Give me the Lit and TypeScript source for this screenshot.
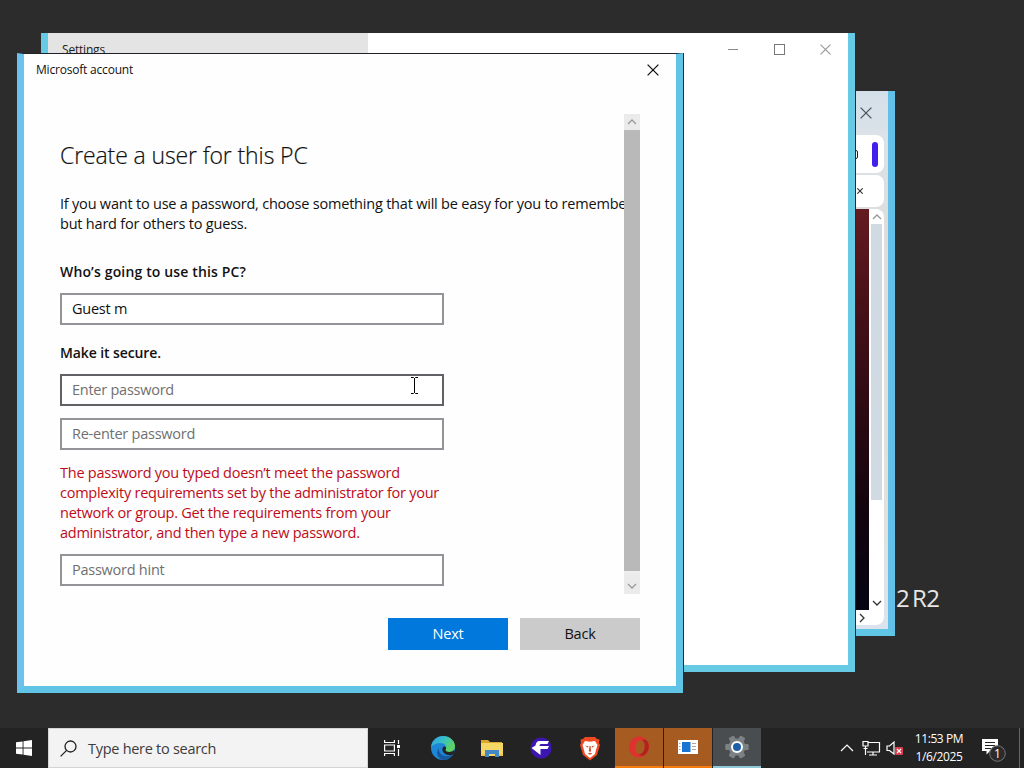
import { LitElement, css, html, svg } from "lit";
import { customElement, property, state } from "lit/decorators.js";
import { classMap } from "lit/directives/class-map.js";

const chevron = (points: string) => html`
  <svg width="10" height="10" viewBox="0 0 10 10" fill="none" stroke="currentColor" stroke-width="1.3">
    <polyline points=${points} />
  </svg>
`;

const UP = "1,7 5,3 9,7";
const DOWN = "1,3 5,7 9,3";
const RIGHT = "3,1 7,5 3,9";

const cross = (size: number) => html`
  <svg width=${size} height=${size} viewBox="0 0 12 12" fill="none" stroke="currentColor" stroke-width="1.3">
    <path d="M.6 .6 11.4 11.4M11.4 .6 .6 11.4" />
  </svg>
`;

@customElement("browser-window")
export class BrowserWindow extends LitElement {
  static styles = css`
    :host {
      display: flex;
      flex-direction: column;
      box-sizing: border-box;
      border-right: 7px solid #62bfe8;
      border-bottom: 7px solid #5fc6e6;
      background: linear-gradient(#d3dfe9, #dbe2e8 44px, #dddddd 130px, #e2e0da 400px, #dde3ee);
      padding: 0 4px 4px 0;
    }
    .titlebar {
      display: flex;
      justify-content: flex-end;
      align-items: center;
      height: 44px;
      padding-right: 12px;
      color: #4a545c;
    }
    .bar {
      display: flex;
      justify-content: flex-end;
      align-items: center;
      box-sizing: border-box;
      background: #fff;
      border-radius: 8px;
    }
    .address {
      height: 38px;
      padding-right: 6px;
      gap: 14px;
    }
    .box {
      width: 5px;
      height: 7px;
      border: 1.5px solid #222;
      border-radius: 2px;
    }
    .pill {
      width: 6px;
      height: 25px;
      border-radius: 3px;
      background: #431fec;
    }
    .tabs {
      height: 32px;
      margin-top: 2px;
      padding-right: 21px;
      color: #333;
    }
    .tabs svg {
      stroke-width: 2.2px;
    }
    .view {
      display: flex;
      flex: 1;
      margin-top: 2px;
      background: #fff;
      border-radius: 0 8px 0 0;
    }
    .page {
      flex: 1;
      background: linear-gradient(#641c20, #4b1219 20%, #2d0a13 50%, #12040e 75%, #050512);
    }
    .scroll {
      display: flex;
      flex-direction: column;
      align-items: center;
      width: 15px;
      color: #999;
    }
    .arrow {
      display: flex;
      align-items: center;
      height: 15px;
    }
    .thumb {
      width: 11px;
      height: 276px;
      background: #cfdae3;
    }
    .arrow.last {
      margin-top: auto;
      color: #333;
    }
    .bottom {
      display: flex;
      justify-content: flex-end;
      align-items: center;
      box-sizing: border-box;
      height: 15px;
      padding-right: 17px;
      background: #fff;
      border-radius: 0 0 8px 0;
      color: #333;
    }
  `;

  render() {
    return html`
      <div class="titlebar">${cross(12)}</div>
      <div class="bar address">
        <div class="box"></div>
        <div class="pill"></div>
      </div>
      <div class="bar tabs">${cross(6)}</div>
      <div class="view">
        <div class="page"></div>
        <div class="scroll">
          <div class="arrow">${chevron(UP)}</div>
          <div class="thumb"></div>
          <div class="arrow last">${chevron(DOWN)}</div>
        </div>
      </div>
      <div class="bottom">${chevron(RIGHT)}</div>
    `;
  }
}

@customElement("settings-window")
export class SettingsWindow extends LitElement {
  static styles = css`
    :host {
      display: block;
      box-sizing: border-box;
      border: 7px solid #66cae5;
      border-top: 0;
      background: #fff;
    }
    .titlebar {
      display: flex;
      height: 32px;
    }
    .name {
      box-sizing: border-box;
      width: 320px;
      padding: 8px 14px;
      background: #e4e4e4;
      color: #1b1b1b;
      font-size: 12px;
      line-height: 18px;
      letter-spacing: -0.2px;
    }
    .controls {
      display: flex;
      flex: 1;
      justify-content: flex-end;
      align-items: center;
      gap: 35px;
      padding-right: 17px;
      color: #999;
    }
  `;

  render() {
    return html`
      <div class="titlebar">
        <div class="name">Settings</div>
        <div class="controls">
          <svg width="11" height="11"><path d="M0 5.5h10" stroke="#888" /></svg>
          <svg width="11" height="11"><rect x=".5" y=".5" width="10" height="10" fill="none" stroke="#777" /></svg>
          ${cross(11)}
        </div>
      </div>
    `;
  }
}

@customElement("text-field")
export class TextField extends LitElement {
  @property() value = "";
  @property() placeholder = "";
  @property({ type: Boolean }) hovered = false;

  static styles = css`
    :host {
      display: block;
    }
    input {
      display: block;
      box-sizing: border-box;
      width: 384px;
      height: 32px;
      padding: 0 10px 2px;
      border: 2px solid #959397;
      outline: 0;
      background: #fff;
      color: #111;
      font: inherit;
      letter-spacing: inherit;
    }
    input.hovered {
      border-color: #626064;
    }
    input::placeholder {
      color: #707070;
      opacity: 1;
    }
  `;

  render() {
    return html`
      <input
        class=${classMap({ hovered: this.hovered })}
        .value=${this.value}
        placeholder=${this.placeholder}
      />
    `;
  }
}

@customElement("account-dialog")
export class AccountDialog extends LitElement {
  static styles = css`
    :host {
      display: flex;
      flex-direction: column;
      box-sizing: border-box;
      border: 7px solid #60c4e6;
      border-left-color: #6bc2ee;
      border-top: 1px solid #20202a;
      box-shadow: 1px 0 0 #17303c;
      background: #fefefe;
      color: #111;
    }
    .titlebar {
      display: flex;
      justify-content: space-between;
      align-items: center;
      height: 31px;
      padding: 0 17px 1px 12px;
      font-size: 12px;
      letter-spacing: -0.2px;
    }
    .body {
      display: flex;
      justify-content: space-between;
      height: 480px;
      margin: 28px 36px 0;
      font-size: 14.5px;
      line-height: 20px;
      letter-spacing: -0.25px;
    }
    .form {
      width: 564px;
      overflow: hidden;
      white-space: nowrap;
    }
    h1 {
      margin: 25px 0 0;
      font-size: 23px;
      line-height: 32px;
      font-weight: 300;
      letter-spacing: -0.12px;
      -webkit-text-stroke: 0.2px #111;
    }
    p {
      margin: 23px 0 0;
      letter-spacing: -0.21px;
    }
    label {
      display: block;
      margin: 28px 0 11px;
      font-size: 14px;
      font-weight: 600;
      letter-spacing: 0.15px;
    }
    label.second {
      margin-top: 18px;
      letter-spacing: -0.1px;
    }
    text-field + text-field {
      margin-top: 12px;
    }
    .error {
      margin: 13px 0 11px;
      color: #bd0b18;
    }
    .scroll {
      display: flex;
      flex-direction: column;
      width: 16px;
      background: #eee;
      color: #999;
    }
    .arrow {
      display: flex;
      justify-content: center;
      align-items: center;
      height: 16px;
      background: #ebebeb;
    }
    .thumb {
      height: 441px;
      background: #b9b9b9;
    }
    .arrow.last {
      height: 21px;
      margin-top: auto;
    }
    .arrow.last svg {
      margin-top: 4px;
    }
    .actions {
      display: flex;
      justify-content: flex-end;
      gap: 12px;
      margin: 24px 36px 0;
    }
    button {
      width: 120px;
      height: 32px;
      padding: 0 0 2px;
      border: 0;
      background: #cbcbcb;
      color: #111;
      font: inherit;
      font-size: 14.5px;
      letter-spacing: -0.2px;
    }
    button.primary {
      background: #0078dc;
      color: #fff;
    }
  `;

  render() {
    return html`
      <div class="titlebar">
        <span>Microsoft account</span>
        ${cross(12)}
      </div>
      <div class="body">
        <div class="form">
          <h1>Create a user for this PC</h1>
          <p>
            If you want to use a password, choose something that will be easy for you to remember<br />
            but hard for others to guess.
          </p>
          <label>Who’s going to use this PC?</label>
          <text-field value="Guest m"></text-field>
          <label class="second">Make it secure.</label>
          <text-field placeholder="Enter password" hovered></text-field>
          <text-field placeholder="Re-enter password"></text-field>
          <div class="error">
            The password you typed doesn’t meet the password<br />
            complexity requirements set by the administrator for your<br />
            network or group. Get the requirements from your<br />
            administrator, and then type a new password.
          </div>
          <text-field placeholder="Password hint"></text-field>
        </div>
        <div class="scroll">
          <div class="arrow">${chevron(UP)}</div>
          <div class="thumb"></div>
          <div class="arrow last">${chevron(DOWN)}</div>
        </div>
      </div>
      <div class="actions">
        <button class="primary">Next</button>
        <button>Back</button>
      </div>
    `;
  }
}

const gearTeeth = [0, 60, 120, 180, 240, 300];

const icons = {
  edge: html`
    <svg width="26" height="26" viewBox="0 0 26 26">
      <defs>
        <linearGradient id="e1" x1="0" y1="0" x2="1" y2=".5">
          <stop offset="0" stop-color="#2f9fe0" />
          <stop offset=".5" stop-color="#36c0c8" />
          <stop offset="1" stop-color="#62d35c" />
        </linearGradient>
      </defs>
      <circle cx="13" cy="13" r="12" fill="#1f86d6" />
      <path d="M1 12C2 5 7 1 13 1c7 0 12 5 12 10 0 4-3 6-6.500 6-3 0-4-1-3-2.500 2-3-.5-6.500-5-6.500C6 8 3 10 1 12Z" fill="url(#e1)" />
      <path d="M9 13c-1 5 4 9 9 8 2 0 4-1 5.500-2.500C21 23 17 25 13.500 25 8 24 5 18 9 13Z" fill="#17599f" />
      <path d="M12.800 12.500c.8-1.300 2.700-1.200 3.200.2.300 1-.6 1.700-.5 2.600.2 1.300 2 1.700 3.500 1.700 2.200 0 4.200-.8 5.400-2.200.3 1.500-.1 3-.9 4.400-2 .9-3.500 1.100-5 .9-4.500-.5-7.200-4.300-5.700-7.600Z" fill="#232323" />
    </svg>
  `,
  explorer: html`
    <svg width="24" height="22" viewBox="0 0 24 22">
      <path d="M1 3h7l2 2h12v3H1Z" fill="#dda62c" />
      <path d="M1 6h22v13H1Z" fill="#f5d766" />
      <path d="M5 20v-7h14v7h-4v-3H9v3Z" fill="#4488c8" />
      <path d="M1 17h4v2H1zM19 17h4v2h-4z" fill="#f0c54c" />
    </svg>
  `,
  fab: html`
    <svg width="22" height="22" viewBox="0 0 22 22">
      <circle cx="11" cy="11" r="10.500" fill="#3c16b0" />
      <path d="M9.500 4H19l-1.500 3H11c-1 0-1.500.7-1.500 2H19l-1.500 3H10.500V18L1.500 11 5.500 8.500C6 5.500 7 4 9.500 4Z" fill="#fff" />
    </svg>
  `,
  brave: html`
    <svg width="22" height="25" viewBox="0 0 22 25">
      <path d="M6 1h10l2 2 2.500.5L20 7l1 2-3 10-7 5.500L4 19 1 9l1-2-.5-3.500L4 3Z" fill="#ef4a22" />
      <path d="M6 5l5 .8L16 5l2.500 4-1.500 5-1 4-5 4-5-4-1-4-1.500-5Z" fill="#fff" />
      <path d="M6 9.500l3.500.8L9 11.800ZM16 9.500l-3.500.8.5 1.500ZM10.500 10h1l.7 5-1.200 1-1.200-1ZM8.500 17.500l2.500-.8 2.500.8-2.500 1.300Z" fill="#d9502c" />
    </svg>
  `,
  opera: html`
    <svg width="22" height="24" viewBox="0 0 22 24">
      <g transform="rotate(12 11 12)">
        <path fill-rule="evenodd" d="M11 1.500a10 10.500 0 1 0 0 21 10 10.500 0 1 0 0-21Zm1 3.500c3 0 4.600 3 4.600 7s-1.600 7-4.600 7S7.200 16 7.200 12 9 5 12 5Z" fill="#e0302f" />
        <path d="M12 5C15 2.500 18 3.500 20 7.500c1.500 4 1 9-3 12-2 1-4 .5-5-.5 3 0 4.600-3 4.600-7S15 5 12 5Z" fill="#b0241f" />
      </g>
    </svg>
  `,
  app: html`
    <svg width="22" height="18" viewBox="0 0 22 18">
      <rect x="1" y="2" width="20" height="14" fill="#fff" />
      <rect x="5" y="4" width="8.500" height="10" fill="#1675d0" />
      <path d="M15 5.500h4M15 8.500h4M15 11.500h4M2 5.500h1.500M2 8.500h1.500M2 11.500h1.500" stroke="#b9a294" />
    </svg>
  `,
  gear: html`
    <svg width="24" height="24" viewBox="0 0 24 24">
      <g fill="#7c8184">
        ${gearTeeth.map((a) => svg`<rect x="9" y=".3" width="6" height="6" rx="1" transform="rotate(${a + 30} 12 12)" />`)}
        <circle cx="12" cy="12" r="8.500" />
      </g>
      <circle cx="12" cy="12" r="5" fill="#1d5fa8" stroke="#fff" stroke-width="2" />
    </svg>
  `,
};

@customElement("task-bar")
export class TaskBar extends LitElement {
  @state() apps = [
    { icon: icons.edge, look: "" },
    { icon: icons.explorer, look: "" },
    { icon: icons.fab, look: "" },
    { icon: icons.brave, look: "" },
    { icon: icons.opera, look: "alert" },
    { icon: icons.app, look: "alert" },
    { icon: icons.gear, look: "active" },
  ];

  static styles = css`
    :host {
      display: flex;
      height: 40px;
      background: #232323;
      color: #fff;
    }
    svg {
      display: block;
    }
    .cell {
      display: flex;
      justify-content: center;
      align-items: center;
      box-sizing: border-box;
      width: 48px;
      margin-right: 1px;
    }
    .start {
      margin: 0;
    }
    .search {
      display: flex;
      align-items: center;
      box-sizing: border-box;
      width: 320px;
      padding-left: 11px;
      gap: 11px;
      border: 1px solid #d4d4d4;
      background: #f3f3f3;
      color: #3c3c3c;
      font-size: 14.5px;
      letter-spacing: -0.28px;
    }
    .task-view {
      margin-right: 3px;
    }
    .alert {
      border-bottom: 2px solid #f57a10;
      background: #a65c20;
    }
    .active {
      border-bottom: 2px solid #8fc9d8;
      background: #4a4d4f;
    }
    .tray {
      display: flex;
      flex: 1;
      justify-content: flex-end;
      align-items: center;
    }
    .clock {
      width: 50px;
      margin: 0 17px 0 10px;
      text-align: center;
      white-space: nowrap;
      font-size: 12px;
      line-height: 18px;
      letter-spacing: -0.4px;
    }
    .notes {
      margin-top: 4px;
    }
    .edge {
      align-self: stretch;
      width: 4px;
      margin-left: 12px;
      border-left: 1px solid #666;
    }
  `;

  render() {
    return html`
      <div class="cell start">
        <svg width="16" height="16" fill="#fff">
          <path d="M0 2.300 6.600 1.400V7.500H0ZM7.500 1.200 16 0V7.500H7.500ZM0 8.400H6.600V14.600L0 13.700ZM7.500 8.400H16V16L7.500 14.800Z" />
        </svg>
      </div>
      <div class="search">
        <svg width="17" height="17" fill="none" stroke="#222" stroke-width="1.300">
          <circle cx="10.500" cy="6.500" r="5.500" />
          <path d="M6.600 10.400.6 16.400" />
        </svg>
        <span>Type here to search</span>
      </div>
      <div class="cell task-view">
        <svg width="16" height="16" fill="none" stroke="#fff" stroke-width="1.200">
          <path d="M.6 0V2.500H10.400V0M.6 16V13.500H10.400V16M.6 5H10.400V11H.6ZM14.500 0V4M14.500 9V16" />
          <path d="M13 5h3v3h-3z" fill="#fff" stroke="none" />
        </svg>
      </div>
      ${this.apps.map(
        (app) => html`
          <div class=${classMap({ cell: true, alert: app.look === "alert", active: app.look === "active" })}>
            ${app.icon}
          </div>
        `
      )}
      <div class="tray">
        <svg width="64" height="20" viewBox="0 0 64 20" fill="none" stroke="#fff" stroke-width="1.200">
          <path d="M1 13 7 7 13 13" />
          <path d="M28 4.500H39.500V14H27M33 14V17M29 17H37M23 3.500H28V8H23ZM25.500 8V17M23.500 10.500H27.500" />
          <path d="M47 8H49.500L54 4V16L49.500 12.500H47Z" />
          <rect x="55" y="9" width="8" height="8" rx="1" fill="#d73c4c" stroke="none" />
          <path d="M57 11 61 15M61 11 57 15" />
        </svg>
        <div class="clock">11:53 PM<br />1/6/2025</div>
        <svg class="notes" width="26" height="26" viewBox="0 0 26 26">
          <path d="M1 2H17V14H9L5.500 17.500V14H1Z" fill="#fff" />
          <path d="M4 5.500H14M4 8.500H14M4 11.500H10" stroke="#232323" />
          <circle cx="16.500" cy="16.500" r="7.800" fill="#2b2b2b" stroke="#777" />
          <text x="16.500" y="21" fill="#fff" font-size="12" text-anchor="middle">1</text>
        </svg>
        <div class="edge"></div>
      </div>
    `;
  }
}

@customElement("app-root")
export class AppRoot extends LitElement {
  static styles = css`
    :host {
      display: flex;
      flex-direction: column;
      justify-content: flex-end;
      position: relative;
      width: 1024px;
      height: 768px;
      overflow: hidden;
      background: #2c2c2c;
      font-family: "Open Sans", "Noto Sans", sans-serif;
    }
    .brand {
      position: absolute;
      left: 896px;
      top: 581px;
      color: #e6e6e6;
      font-size: 24px;
      line-height: 34px;
      letter-spacing: -0.5px;
      word-spacing: -3px;
    }
    browser-window {
      position: absolute;
      left: 560px;
      top: 91px;
      width: 335px;
      height: 545px;
    }
    settings-window {
      position: absolute;
      left: 41px;
      top: 33px;
      width: 814px;
      height: 639px;
      box-shadow: 1px 0 0 #1c2b33;
    }
    account-dialog {
      position: absolute;
      left: 17px;
      top: 53px;
      width: 666px;
      height: 640px;
    }
    .cursor {
      position: absolute;
      left: 410px;
      top: 377px;
    }
  `;

  render() {
    return html`
      <div class="brand">2 R2</div>
      <browser-window></browser-window>
      <settings-window></settings-window>
      <account-dialog></account-dialog>
      <svg class="cursor" width="9" height="17" fill="none" stroke="#000">
        <path d="M1 .5H3.500L4.500 1.500 5.500 .5H8M4.500 1V16M1 16.500H3.500L4.500 15.500 5.500 16.500H8" />
      </svg>
      <task-bar></task-bar>
    `;
  }
}
